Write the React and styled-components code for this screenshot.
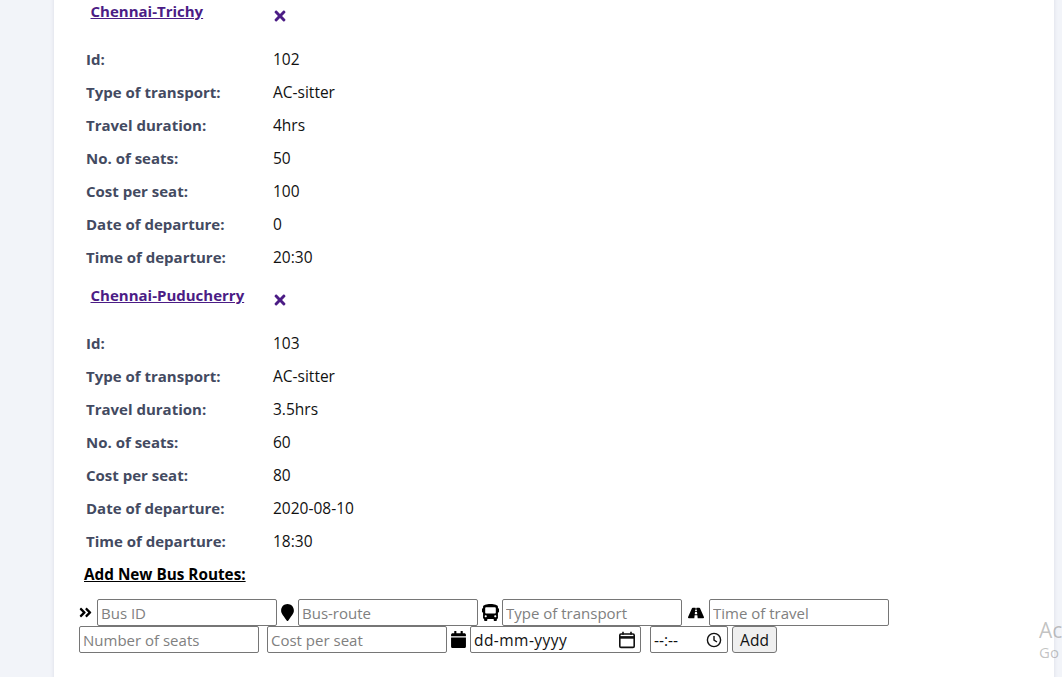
import styled, { createGlobalStyle } from "styled-components";
import { FaTimes, FaAngleDoubleRight, FaMapMarker, FaBus, FaRoad, FaCalendar } from "react-icons/fa";

const GlobalStyle = createGlobalStyle`
  html, body {
    margin: 0;
    height: 677px;
    overflow: hidden;
    background: #f2f4f9;
    font-family: "Open Sans", "Noto Sans", sans-serif;
  }
`;

const Page = styled.div`
  position: relative;
  height: 677px;
  overflow: hidden;
  padding-left: 54px;
`;

const Card = styled.main`
  width: 1000px;
  height: 700px;
  margin-top: -11px;
  box-sizing: border-box;
  background: #fff;
  box-shadow: 0 0 4px rgba(50, 60, 90, 0.12);
  padding-left: 32px;
`;

const RouteHead = styled.div`
  display: grid;
  grid-template-columns: 187px auto;
  height: 53px;
  box-sizing: border-box;
  padding-top: 12px;
`;

const RouteTitle = styled.a`
  margin-left: 4.5px;
  font-size: 15px;
  line-height: 20px;
  font-weight: 700;
  color: #4b1c85;
  text-decoration: underline;
  justify-self: start;
  align-self: start;
`;

const RemoveIcon = styled(FaTimes)`
  color: #4b1c85;
  font-size: 16px;
  margin: 7px 0 0 -1px;
`;

const InfoRow = styled.div`
  display: grid;
  grid-template-columns: 187px auto;
  height: 33px;
  align-items: center;
`;

const InfoLabel = styled.span`
  font-size: 15px;
  font-weight: 700;
  color: #434a61;
`;

const InfoValue = styled.span`
  font-size: 15.5px;
  color: #111;
`;

const AddTitle = styled.h3`
  margin: 7px 0 0 -2px;
  height: 35px;
  font-size: 15.3px;
  line-height: 20px;
  font-weight: 700;
  color: #000;
  text-decoration: underline;
`;

const FormRow = styled.div`
  display: flex;
  align-items: center;
  height: 27px;
  margin-left: -7px;
`;

const FieldIcon = styled.span`
  display: flex;
  justify-content: center;
  box-sizing: border-box;
  width: ${(p) => p.$w}px;
  padding-right: ${(p) => p.$pr || 0}px;
  color: #000;
  font-size: ${(p) => p.$size || 17}px;
`;

const Field = styled.input`
  box-sizing: border-box;
  width: ${(p) => p.$w || 180}px;
  height: 27px;
  margin-right: ${(p) => p.$gap || 0}px;
  padding: 1px 3px;
  border: 1px solid #767676;
  border-radius: 2px;
  background: #fff;
  font-family: "Open Sans", "Noto Sans", sans-serif;
  font-size: 15px;
  color: #111;

  &::placeholder {
    color: #808080;
    opacity: 1;
  }
`;

const PickerBox = styled.div`
  display: flex;
  align-items: center;
  justify-content: space-between;
  box-sizing: border-box;
  width: ${(p) => p.$w}px;
  height: 27px;
  margin-right: ${(p) => p.$gap || 0}px;
  padding: 0 ${(p) => p.$pr}px 0 3px;
  border: 1px solid #767676;
  border-radius: 2px;
  background: #fff;
  font-size: 15.5px;
  letter-spacing: ${(p) => p.$ls || 0}px;
  color: #111;
`;

const AddButton = styled.button`
  box-sizing: border-box;
  width: 45px;
  height: 27px;
  margin-left: 4px;
  padding: 0;
  border: 1px solid #767676;
  border-radius: 3px;
  background: #efefef;
  font-family: "Open Sans", "Noto Sans", sans-serif;
  font-size: 15.5px;
  color: #111;
`;

const Watermark = styled.div`
  position: absolute;
  left: 1039px;
  top: 616px;
  color: rgba(120, 120, 120, 0.45);
  white-space: nowrap;
  pointer-events: none;
`;

const WatermarkTitle = styled.div`
  font-size: 21px;
  line-height: 28px;
`;

const WatermarkText = styled.div`
  font-size: 15px;
  line-height: 17px;
`;

const routes = [
  {
    name: "Chennai-Trichy",
    info: [
      ["Id:", "102"],
      ["Type of transport:", "AC-sitter"],
      ["Travel duration:", "4hrs"],
      ["No. of seats:", "50"],
      ["Cost per seat:", "100"],
      ["Date of departure:", "0"],
      ["Time of departure:", "20:30"],
    ],
  },
  {
    name: "Chennai-Puducherry",
    info: [
      ["Id:", "103"],
      ["Type of transport:", "AC-sitter"],
      ["Travel duration:", "3.5hrs"],
      ["No. of seats:", "60"],
      ["Cost per seat:", "80"],
      ["Date of departure:", "2020-08-10"],
      ["Time of departure:", "18:30"],
    ],
  },
];

function CalendarGlyph() {
  return (
    <svg width="18" height="18" viewBox="0 0 18 18" fill="none" stroke="#111" strokeWidth="1.6">
      <rect x="1.8" y="3" width="14.4" height="13.4" rx="1.2" />
      <path d="M1.8 6.4h14.4" strokeWidth="2.6" />
      <path d="M5 .8v3M13 .8v3" />
    </svg>
  );
}

function ClockGlyph() {
  return (
    <svg width="16" height="16" viewBox="0 0 16 16" fill="none" stroke="#111" strokeWidth="1.4">
      <circle cx="8" cy="8" r="6.6" />
      <path d="M8 4v4.2l3 1.8" />
    </svg>
  );
}

function App() {
  return (
    <Page>
      <GlobalStyle />
      <Card>
        {routes.map((route) => (
          <section key={route.name}>
            <RouteHead>
              <RouteTitle href="#">{route.name}</RouteTitle>
              <RemoveIcon />
            </RouteHead>
            {route.info.map(([label, value]) => (
              <InfoRow key={label}>
                <InfoLabel>{label}</InfoLabel>
                <InfoValue>{value}</InfoValue>
              </InfoRow>
            ))}
          </section>
        ))}
        <AddTitle>Add New Bus Routes:</AddTitle>
        <FormRow>
          <FieldIcon $w={18} $pr={5} $size={15}><FaAngleDoubleRight /></FieldIcon>
          <Field placeholder="Bus ID" />
          <FieldIcon $w={21}><FaMapMarker /></FieldIcon>
          <Field placeholder="Bus-route" />
          <FieldIcon $w={24}><FaBus /></FieldIcon>
          <Field placeholder="Type of transport" />
          <FieldIcon $w={27} $size={16}><FaRoad /></FieldIcon>
          <Field placeholder="Time of travel" />
        </FormRow>
        <FormRow>
          <Field placeholder="Number of seats" $gap={8} />
          <Field placeholder="Cost per seat" />
          <FieldIcon $w={23}><FaCalendar /></FieldIcon>
          <PickerBox $w={171} $gap={9} $pr={4} $ls={0.45}>
            dd-mm-yyyy
            <CalendarGlyph />
          </PickerBox>
          <PickerBox $w={78} $pr={5}>
            --:--
            <ClockGlyph />
          </PickerBox>
          <AddButton>Add</AddButton>
        </FormRow>
      </Card>
      <Watermark>
        <WatermarkTitle>Activate Windows</WatermarkTitle>
        <WatermarkText>Go to Settings to activate Windows.</WatermarkText>
      </Watermark>
    </Page>
  );
}

export default App;
